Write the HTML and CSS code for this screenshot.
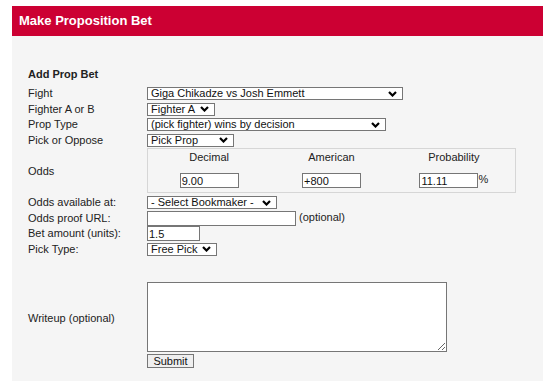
FILE: index.html
```html
<!DOCTYPE html>
<html lang="en">
  <head>
    <meta charset="UTF-8" />
    <meta name="viewport" content="width=device-width, initial-scale=1.0" />
    <title>Make Proposition Bet</title>
    <link rel="stylesheet" href="styles.css">
  </head>
  <body>
    <div class="page">
      <div class="header">Make Proposition Bet</div>

      <div class="panel">
        <h2>Add Prop Bet</h2>

        <!-- Prop bet form -->
        <form class="prop-form" onsubmit="return false;">
          <label>Fight</label>
          <div>
            <select class="w-fight">
              <option>Giga Chikadze vs Josh Emmett</option>
            </select>
          </div>

          <label>Fighter A or B</label>
          <div>
            <select class="w-fighter">
              <option>Fighter A</option>
              <option>Fighter B</option>
            </select>
          </div>

          <label>Prop Type</label>
          <div>
            <select class="w-prop">
              <option>(pick fighter) wins by decision</option>
            </select>
          </div>

          <label>Pick or Oppose</label>
          <div>
            <select class="w-pick">
              <option>Pick Prop</option>
              <option>Oppose Prop</option>
            </select>
          </div>

          <label>Odds</label>
          <div class="odds-box">
            <span>Decimal</span>
            <span>American</span>
            <span>Probability</span>
            <div><input type="text" class="odds-input" value="9.00" /></div>
            <div><input type="text" class="odds-input" value="+800" /></div>
            <div><input type="text" class="odds-input" value="11.11" />%</div>
          </div>

          <label>Odds available at:</label>
          <div>
            <select class="w-book">
              <option>- Select Bookmaker -</option>
            </select>
          </div>

          <label>Odds proof URL:</label>
          <div><input type="text" class="w-url" /> (optional)</div>

          <label>Bet amount (units):</label>
          <div><input type="text" class="w-units" value="1.5" /></div>

          <label>Pick Type:</label>
          <div>
            <select class="w-type">
              <option>Free Pick</option>
            </select>
          </div>

          <div class="spacer"></div>

          <label class="writeup-label">Writeup (optional)</label>
          <div><textarea class="writeup"></textarea></div>

          <span></span>
          <div><button type="submit">Submit</button></div>
        </form>
      </div>
    </div>
  </body>
</html>
```

FILE: styles.css
```css
html,
body {
  margin: 0;
  overflow: hidden;
}

body {
  font-family: "Liberation Sans", Arial, sans-serif;
  font-size: 11px;
  color: #222;
  background: #fff;
}

.page {
  margin: 6px 0 0 12px;
}

.header {
  background: #cc0033;
  color: #fff;
  font-size: 13px;
  font-weight: bold;
  height: 30px;
  line-height: 29px;
  padding-left: 7px;
}

.panel {
  background: #f5f5f5;
  padding: 31px 16px 20px;
}

.panel h2 {
  font-size: 11px;
  line-height: 14px;
  margin: 0 0 5px;
}

.prop-form {
  display: grid;
  grid-template-columns: 119px 1fr;
  align-items: center;
}

.prop-form label {
  line-height: 15.5px;
}

.prop-form .writeup-label {
  padding-top: 3px;
}

.prop-form select,
.prop-form input,
.prop-form textarea,
.prop-form button {
  font-family: "Liberation Sans", Arial, sans-serif;
  font-size: 11px;
  color: #111;
  box-sizing: border-box;
  border: 1px solid #767676;
  border-radius: 0;
  background-color: #fff;
  margin: 0;
  vertical-align: middle;
}

.prop-form select {
  -webkit-appearance: none;
  appearance: none;
  display: block;
  height: 13px;
  line-height: 11px;
  padding: 0 14px 0 3px;
  background-image: url("data:image/svg+xml,%3Csvg xmlns='http://www.w3.org/2000/svg' width='9' height='6' viewBox='0 0 9 6'%3E%3Cpath d='M1 1l3.5 3.5L8 1' fill='none' stroke='%23000' stroke-width='2.2'/%3E%3C/svg%3E");
  background-repeat: no-repeat;
  background-position: right 5px center;
}

.prop-form input {
  height: 15px;
  padding: 0 1px;
}

.w-fight { width: 256px; }
.w-fighter { width: 68px; }
.w-prop { width: 239px; }
.w-pick { width: 87px; }
.w-book { width: 130px; }
.w-type { width: 70px; }
.w-url { width: 149px; }
.w-units { width: 53px; }

.odds-box {
  width: 369px;
  box-sizing: border-box;
  border: 1px solid #d6d6d6;
  padding: 2px 0 4px;
  margin-bottom: 2px;
  display: grid;
  grid-template-columns: repeat(3, 1fr);
  row-gap: 9px;
  text-align: center;
  line-height: 13px;
}

.prop-form .odds-input {
  width: 59px;
}

.spacer {
  grid-column: 1 / -1;
  height: 25px;
}

.prop-form .writeup {
  display: block;
  width: 300px;
  height: 70px;
  resize: both;
}

.prop-form button {
  display: block;
  margin-top: 2px;
  width: 47px;
  height: 14px;
  padding: 0;
  background-color: #efefef;
  line-height: 12px;
}
```
